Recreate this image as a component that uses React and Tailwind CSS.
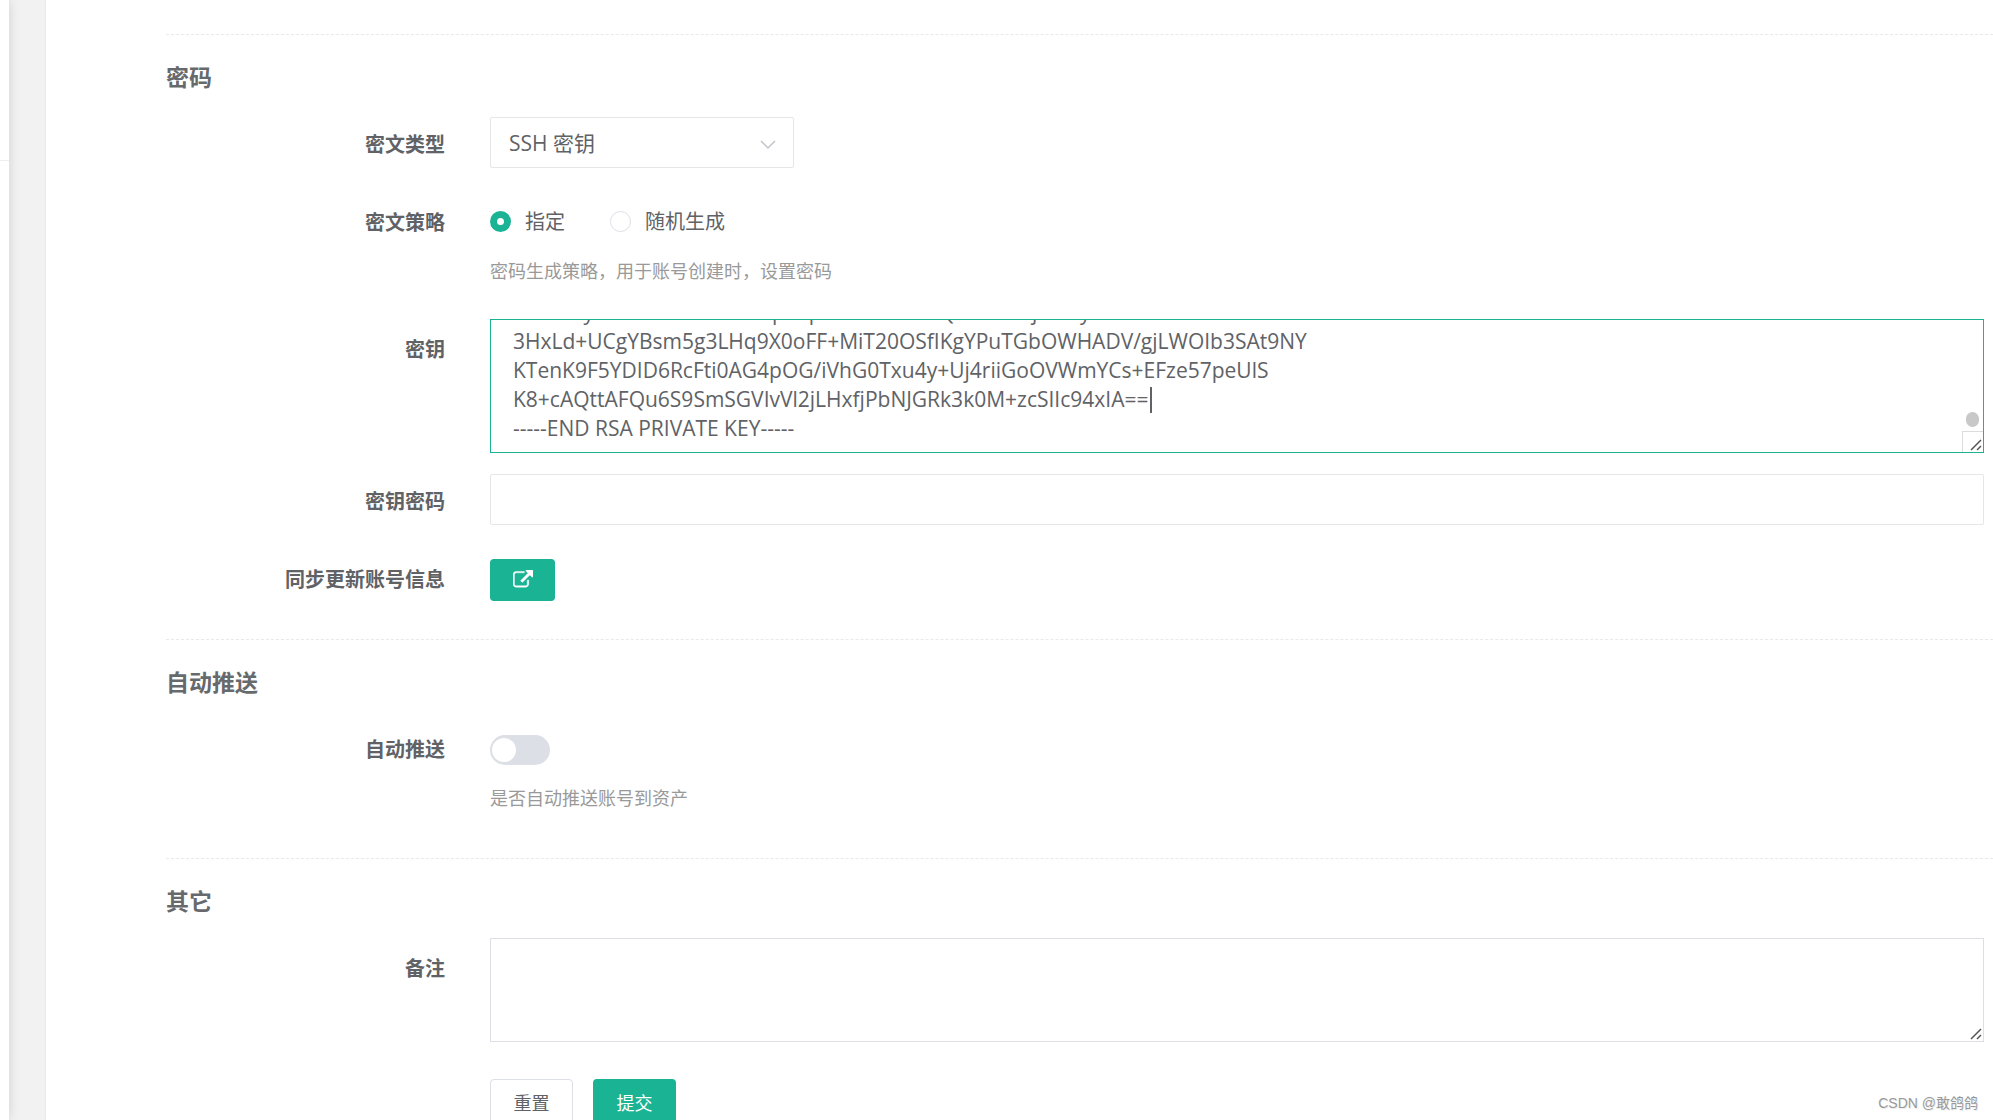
import { useEffect, useRef, useState } from 'react';

const KEY_TEXT = `-----BEGIN RSA PRIVATE KEY-----
3kE8a0y5bS9e02x76a4E8Sp83p3e46aS0E5xQ3e2S7kIj4b8Iy03a
3HxLd+UCgYBsm5g3LHq9X0oFF+MiT20OSfIKgYPuTGbOWHADV/gjLWOIb3SAt9NY
KTenK9F5YDID6RcFti0AG4pOG/iVhG0Txu4y+Uj4riiGoOVWmYCs+EFze57peUlS
K8+cAQttAFQu6S9SmSGVIvVl2jLHxfjPbNJGRk3k0M+zcSIIc94xIA==
-----END RSA PRIVATE KEY-----`;

function Section({ title, children }) {
  return (
    <section className="border-t border-dashed border-[#e7eaec] pt-7 pb-3">
      <h3 className="mb-[23px] text-[23px] leading-7 font-bold text-[#676a6c]">{title}</h3>
      {children}
    </section>
  );
}

function Row({ label, htmlFor, children }) {
  return (
    <div className="mb-4 flex min-h-[62px] items-start gap-[45px]">
      <label htmlFor={htmlFor} className="w-[279px] shrink-0 text-right text-[20px] leading-[62px] font-bold text-[#606266]">
        {label}
      </label>
      <div className="min-w-0 flex-1">{children}</div>
    </div>
  );
}

function Help({ children }) {
  return <p className="pt-[6px] pb-[18px] text-[18px] leading-7 text-[#999999]">{children}</p>;
}

function ResizeGrip() {
  return (
    <svg className="h-3 w-3" viewBox="0 0 12 12" fill="none" stroke="#555555" strokeWidth="1.5" aria-hidden="true">
      <path d="M1 11L11 1M7 11L11 7" />
    </svg>
  );
}

function Radio({ id, label, checked, onChange }) {
  return (
    <span className="flex items-center gap-[14px]">
      <input id={id} type="radio" name="strategy" checked={checked} onChange={onChange}
        className="h-[21px] w-[21px] appearance-none rounded-full border border-[#dcdfe6] bg-white checked:border-[7px] checked:border-[#1ab394]" />
      <label htmlFor={id} className="text-[20px] text-[#606266]">{label}</label>
    </span>
  );
}

export default function App() {
  const [secretType, setSecretType] = useState('ssh_key');
  const [strategy, setStrategy] = useState('specific');
  const [secret, setSecret] = useState(KEY_TEXT);
  const [autoPush, setAutoPush] = useState(false);
  const secretRef = useRef(null);

  // keep the end of the key in view
  useEffect(() => {
    const el = secretRef.current;
    if (el) el.scrollTop = el.scrollHeight;
  }, []);

  return (
    <div className="flex h-screen overflow-hidden bg-[#f2f2f2] font-['Open_Sans','Noto_Sans_CJK_SC',sans-serif] text-[#606266]">
      <aside className="z-10 w-[9px] shrink-0 bg-white shadow-[0_0_12px_rgba(0,0,0,0.15)]">
        <div className="h-[161px] border-b border-[#eeeeee]" />
      </aside>

      <main className="ml-9 min-w-0 flex-1 overflow-hidden border-l border-[#e7eaec] bg-white pt-[34px] pl-[120px]">
        <form onSubmit={e => e.preventDefault()}>
          <Section title="密码">
            <div className="pr-[9px]">
              <Row label="密文类型" htmlFor="secret-type">
                <div className="flex h-[57px] items-center">
                  <div className="relative w-[304px]">
                    <select id="secret-type" value={secretType} onChange={e => setSecretType(e.target.value)}
                      className="h-[51px] w-full appearance-none rounded-[2px] border border-[#e5e6e7] bg-white px-[18px] pt-[2px] text-[21px] text-[#606266]">
                      <option value="ssh_key">SSH 密钥</option>
                      <option value="password">密码</option>
                    </select>
                    <svg className="pointer-events-none absolute top-[22px] right-[18px] h-[11px] w-4" viewBox="0 0 16 11" fill="none" stroke="#c0c4cc" strokeWidth="1.5" aria-hidden="true">
                      <path d="M1 2L8 9L15 2" />
                    </svg>
                  </div>
                </div>
              </Row>

              <Row label="密文策略">
                <div className="flex h-[59px] items-center gap-[45px]">
                  <Radio id="specific" label="指定" checked={strategy === 'specific'} onChange={() => setStrategy('specific')} />
                  <Radio id="random" label="随机生成" checked={strategy === 'random'} onChange={() => setStrategy('random')} />
                </div>
                <Help>密码生成策略，用于账号创建时，设置密码</Help>
              </Row>

              <Row label="密钥" htmlFor="secret">
                <div className="pb-[2px]">
                  <div className="relative h-[134px]">
                    <textarea id="secret" ref={secretRef} value={secret} onChange={e => setSecret(e.target.value)} spellCheck={false}
                      className="h-full w-full resize-none overflow-hidden border border-[#1ab394] bg-white px-[22px] pt-2 pb-[9px] text-[21px] leading-[29px] text-[#606266] outline-none" />
                    <span className="absolute top-[68px] left-[660px] h-[26px] w-[2px] bg-[#606266]" />
                    <span className="absolute right-[5px] bottom-[26px] h-[15px] w-[13px] rounded-full bg-[#c8c8c8]" />
                    <span className="absolute right-px bottom-px flex h-[21px] w-[21px] items-end justify-end border-t border-l border-[#dcdcdc] bg-white p-px">
                      <ResizeGrip />
                    </span>
                  </div>
                </div>
              </Row>

              <Row label="密钥密码" htmlFor="passphrase">
                <div className="flex h-[57px] items-center">
                  <input id="passphrase" type="password" className="h-[51px] w-full rounded-[2px] border border-[#e5e6e7] bg-white px-[18px] text-[20px]" />
                </div>
              </Row>

              <Row label="同步更新账号信息" htmlFor="sync">
                <div className="flex h-[62px] items-center">
                  <button id="sync" type="button" aria-label="同步更新账号信息" className="flex h-[42px] w-[65px] items-center justify-center rounded bg-[#1ab394] text-white">
                    <svg className="h-5 w-5" viewBox="0 0 1792 1792" fill="currentColor" stroke="currentColor" strokeWidth="40" aria-hidden="true">
                      <path d="M1408 928v320q0 119-84.500 203.500t-203.500 84.500h-832q-119 0-203.500-84.500t-84.500-203.500v-832q0-119 84.500-203.500t203.500-84.500h704q14 0 23 9t9 23v64q0 14-9 23t-23 9h-704q-66 0-113 47t-47 113v832q0 66 47 113t113 47h832q66 0 113-47t47-113v-320q0-14 9-23t23-9h64q14 0 23 9t9 23zm384-864v512q0 26-19 45t-45 19-45-19l-176-176-652 652q-10 10-23 10t-23-10l-114-114q-10-10-10-23t10-23l652-652-176-176q-19-19-19-45t19-45 45-19h512q26 0 45 19t19 45z" />
                    </svg>
                  </button>
                </div>
              </Row>
            </div>
          </Section>

          <Section title="自动推送">
            <Row label="自动推送" htmlFor="auto-push">
              <div className="flex h-[59px] items-end pb-[13px]">
                <button id="auto-push" type="button" role="switch" aria-checked={autoPush} onClick={() => setAutoPush(v => !v)}
                  className={`flex h-[30px] w-[60px] items-center rounded-full px-[2px] ${autoPush ? 'justify-end bg-[#1ab394]' : 'bg-[#dcdfe6]'}`}>
                  <span className="h-6 w-6 rounded-full bg-white" />
                </button>
              </div>
              <Help>是否自动推送账号到资产</Help>
            </Row>
          </Section>

          <Section title="其它">
            <div className="pr-[9px]">
              <Row label="备注" htmlFor="comment">
                <div className="relative h-[104px]">
                  <textarea id="comment" className="h-full w-full resize-none border border-[#dcdfe6] bg-white px-[22px] py-2 text-[21px] leading-[29px] outline-none" />
                  <span className="absolute right-px bottom-px p-px">
                    <ResizeGrip />
                  </span>
                </div>
              </Row>
            </div>
            <div className="flex gap-5 pt-[21px] pl-[324px] text-[18px]">
              <button type="reset" className="h-12 w-[83px] rounded border border-[#dcdfe6] bg-white text-[#606266]">重置</button>
              <button type="submit" className="h-12 w-[83px] rounded bg-[#1ab394] text-white">提交</button>
            </div>
          </Section>
        </form>
      </main>

      <span className="absolute right-[15px] bottom-[3px] font-['Liberation_Sans','Noto_Sans_CJK_SC',sans-serif] text-[14px] leading-7 text-[#999999] [text-shadow:1px_1px_0_#eeeeee]">
        CSDN @敢鸽鸽
      </span>
    </div>
  );
}
